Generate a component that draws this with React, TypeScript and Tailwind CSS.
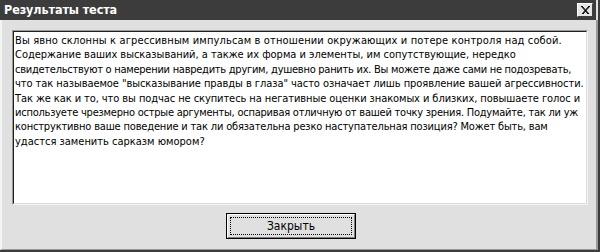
import React from 'react'

// each line of the message, with a tracking tweak so the line ends where the original wraps
const lines: { text: string; cls: string }[] = [
  { text: 'Вы явно склонны к агрессивным импульсам в отношении окружающих и потере контроля над собой.', cls: 'tracking-[0.135px]' },
  { text: 'Содержание ваших высказываний, а также их форма и элементы, им сопутствующие, нередко', cls: 'tracking-[-0.02px]' },
  { text: 'свидетельствуют о намерении навредить другим, душевно ранить их. Вы можете даже сами не подозревать,', cls: 'tracking-[-0.26px]' },
  { text: 'что так называемое "высказывание правды в глаза" часто означает лишь проявление вашей агрессивности.', cls: 'tracking-[-0.06px]' },
  { text: 'Так же как и то, что вы подчас не скупитесь на негативные оценки знакомых и близких, повышаете голос и', cls: 'tracking-[-0.08px]' },
  { text: 'используете чрезмерно острые аргументы, оспаривая отличную от вашей точку зрения. Подумайте, так ли уж', cls: 'tracking-[-0.23px]' },
  { text: 'конструктивно ваше поведение и так ли обязательна резко наступательная позиция? Может быть, вам', cls: 'tracking-[-0.17px]' },
  { text: 'удастся заменить сарказм юмором?', cls: 'tracking-normal' },
]

function CloseBox() {
  return (
    <button className="w-[16px] h-[14px] bg-[#e6e6e6] border border-t-white border-l-white border-r-[#404040] border-b-[#404040] flex items-center justify-center">
      <svg width="9" height="8" viewBox="0 0 9 8">
        <path d="M1 0 L8 8 M0 0 L7 8 M8 0 L1 8 M9 0 L2 8" stroke="#000" strokeWidth="1" />
      </svg>
    </button>
  )
}

export default function App() {
  return (
    <div
      className="w-[600px] h-[252px] bg-[#e0e0e0] flex flex-col border-r-2 border-b-2 border-[#3c3c3c] text-black"
      style={{ fontFamily: '"DejaVu Sans Condensed", "DejaVu Sans", sans-serif' }}
    >
      {/* Title bar */}
      <div className="h-[20px] mr-[2px] bg-[#3c3c3c] flex items-center pl-[4px] pr-[3px] shrink-0">
        <span className="text-white font-bold font-stretch-condensed text-[12.5px] leading-none tracking-[-0.1px]">Результаты теста</span>
        <div className="ml-auto">
          <CloseBox />
        </div>
      </div>

      {/* Body */}
      <div className="flex-1 flex flex-col border-l-2 border-l-[#f4f4f4] border-r-2 border-r-[#9a9a9a] border-b border-b-[#9a9a9a] pl-[10px] pr-[4px] pt-[10px]">
        <div className="w-[576px] h-[175px] border border-t-[#9a9a9a] border-l-[#9a9a9a] border-r-[#f4f4f4] border-b-[#f4f4f4]">
          <div className="w-full h-full overflow-hidden bg-white border border-t-[#202020] border-l-[#202020] border-r-[#dcdcdc] border-b-[#dcdcdc] pl-[1px] pt-[2px] text-[11px] leading-[14.4px] font-stretch-condensed">
            {lines.map((l, i) => (
              <div key={i} className={`whitespace-nowrap ${l.cls}`}>{l.text}</div>
            ))}
          </div>
        </div>

        <div className="mt-[8px] ml-[214px]">
          <button className="w-[130px] h-[26px] border border-black bg-[#e0e0e0] p-0 block">
            <div className="w-full h-full border border-t-white border-l-white border-r-[#808080] border-b-[#808080] p-[2px]">
              <div className="w-full h-full border border-dotted border-black flex items-center justify-center text-[12px] font-stretch-condensed">
                Закрыть
              </div>
            </div>
          </button>
        </div>
      </div>
    </div>
  )
}
